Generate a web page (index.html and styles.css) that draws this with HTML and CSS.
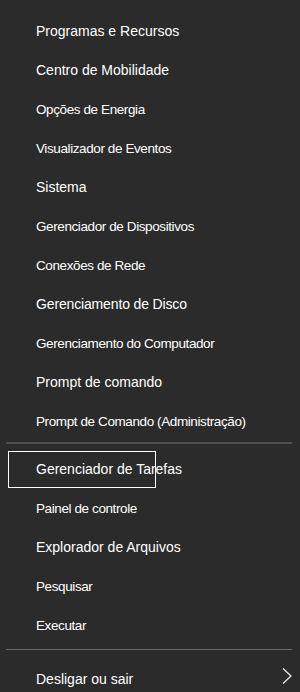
FILE: index.html
```html
<!DOCTYPE html>
<html lang="pt-BR">
<head>
  <meta charset="UTF-8" />
  <title>Menu Win+X</title>
  <meta name="viewport" content="width=device-width,initial-scale=1" />
  <link rel="stylesheet" href="styles.css">
</head>
<body>
  <div class="menu">
    <div class="item">Programas e Recursos</div>
    <div class="item">Centro de Mobilidade</div>
    <div class="item narrow">Opções de Energia</div>
    <div class="item narrow">Visualizador de Eventos</div>
    <div class="item">Sistema</div>
    <div class="item narrow">Gerenciador de Dispositivos</div>
    <div class="item narrow">Conexões de Rede</div>
    <div class="item tight">Gerenciamento de Disco</div>
    <div class="item narrow">Gerenciamento do Computador</div>
    <div class="item">Prompt de comando</div>
    <div class="item narrow">Prompt de Comando (Administração)</div>

    <div class="sep"></div>

    <div class="item focused">Gerenciador de Tarefas</div>
    <div class="item narrow">Painel de controle</div>
    <div class="item">Explorador de Arquivos</div>
    <div class="item narrow">Pesquisar</div>
    <div class="item narrow">Executar</div>

    <div class="sep sep-last"></div>

    <div class="item submenu">
      <span>Desligar ou sair</span>
      <svg class="chevron" width="10" height="16" viewBox="0 0 10 16">
        <polyline points="1,0.5 9,8 1,15.5" fill="none" stroke="#e8e8e8" stroke-width="1.3" />
      </svg>
    </div>
  </div>
</body>
</html>
```

FILE: styles.css
```css
body {
  margin: 0;
  background: #2b2b2b;
  font-family: "Liberation Sans", Arial, sans-serif;
  color: #ffffff;
}
.menu {
  width: 300px;
  height: 692px;
  padding-top: 12px;
  box-sizing: border-box;
  overflow: hidden;
}
.item {
  height: 39px;
  line-height: 39px;
  padding-left: 36px;
  font-size: 14px;
  white-space: nowrap;
  position: relative;
}
/* some entries render a bit more condensed */
.item.narrow {
  font-size: 13.5px;
  letter-spacing: -0.4px;
}
.item.tight {
  letter-spacing: -0.15px;
}
/* keyboard focus rectangle */
.item.focused::after {
  content: "";
  position: absolute;
  left: 8px; top: 1px;
  width: 146px; height: 35px;
  border: 1px solid #ffffff;
}
.sep {
  height: 2px;
  margin: 1px 8px 6px 6px;
  background: #4f4f4f;
}
.sep-last {
  height: 1px;
  margin: 4px 8px 10px 6px;
  background: #6a6a6a;
}
.submenu {
  display: flex;
  align-items: center;
  justify-content: space-between;
  padding-right: 8px;
}
.chevron {
  margin-bottom: 8px;
}
```
